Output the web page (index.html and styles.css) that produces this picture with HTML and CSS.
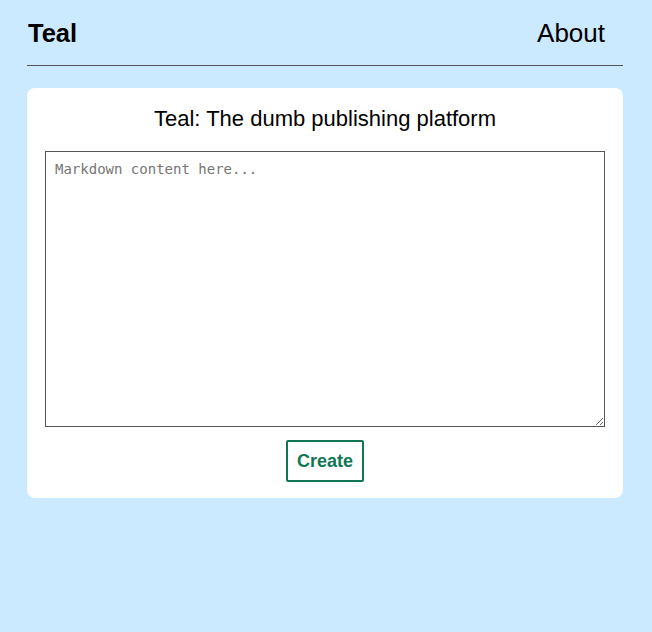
FILE: index.html
```html
<!DOCTYPE html>
<html>
<head>
<meta charset="utf-8">
<link rel="stylesheet" href="styles.css">
</head>
<body>
<div class="page">
  <header class="header">
    <a class="brand" href="#">Teal</a>
    <a class="nav-link" href="#">About</a>
  </header>
  <main class="card">
    <h1 class="title">Teal: The dumb publishing platform</h1>
    <textarea class="editor" placeholder="Markdown content here..."></textarea>
    <div class="actions">
      <button class="btn">Create</button>
    </div>
  </main>
</div>
</body>
</html>
```
FILE: styles.css
```css
html, body {
  margin: 0;
  padding: 0;
  background: #cceaff;
  font-family: "Liberation Sans", Arial, sans-serif;
  color: #000;
}
.page {
  width: 596px;
  margin-left: 27px;
}
.header {
  height: 65px;
  border-bottom: 1px solid #555;
  display: flex;
  align-items: center;
  justify-content: space-between;
}
.brand {
  font-weight: bold;
  font-size: 25.5px;
  color: #000;
  text-decoration: none;
  margin-top: 1px;
  margin-left: 1px;
}
.nav-link {
  font-size: 26px;
  color: #000;
  text-decoration: none;
  margin-right: 18px;
  margin-top: 1px;
}
.card {
  margin-top: 22px;
  background: #fff;
  border-radius: 8px;
  padding: 18px 18px 16px;
  display: flex;
  flex-direction: column;
}
.title {
  margin: 0;
  font-size: 22px;
  font-weight: normal;
  text-align: center;
  line-height: 25px;
}
.editor {
  margin-top: 20px;
  height: 276px;
  box-sizing: border-box;
  border: 1px solid #555;
  padding: 9px 9px;
  font-family: "DejaVu Sans Mono", monospace;
  font-size: 14px;
  resize: vertical;
  display: block;
}
.editor::placeholder {
  color: #767676;
}
.actions {
  display: flex;
  justify-content: center;
  margin-top: 13px;
}
.btn {
  background: #fff;
  border: 2px solid #107654;
  border-radius: 2px;
  color: #107654;
  font-family: "Liberation Sans", Arial, sans-serif;
  font-weight: bold;
  font-size: 18px;
  line-height: 20px;
  padding: 9px 9px;
  cursor: pointer;
}
```
